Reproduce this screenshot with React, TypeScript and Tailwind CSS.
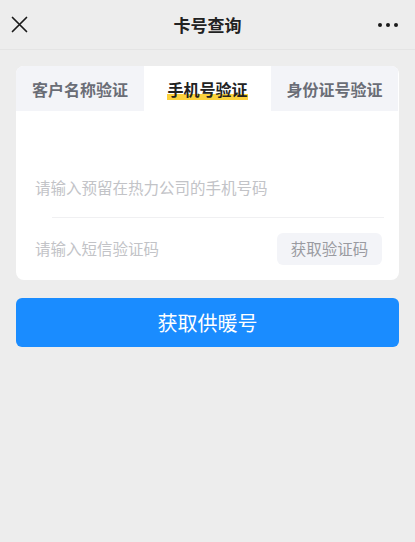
import { useState } from "react";

const tabs = ["客户名称验证", "手机号验证", "身份证号验证"];

export default function App() {
  const [active, setActive] = useState(1);

  return (
    <div
      className="min-h-[542px] bg-[#ededed] text-[#222]"
      style={{ fontFamily: '"Noto Sans CJK SC", "Noto Sans", sans-serif' }}
    >
      {/* Top bar */}
      <header className="relative flex h-[50px] items-center justify-between border-b border-[#e4e4e4] px-[11px]">
        <svg width="17" height="17" viewBox="0 0 17 17" fill="none" stroke="#1a1a1a" strokeWidth="1.7" strokeLinecap="round">
          <path d="M1.5 1.5 L15.5 15.5 M15.5 1.5 L1.5 15.5" />
        </svg>
        <h1 className="absolute left-1/2 -translate-x-1/2 text-[17px] font-bold">卡号查询</h1>
        <div className="mr-[6px] flex items-center gap-[4px]">
          <span className="h-[4px] w-[4px] rounded-full bg-[#1a1a1a]" />
          <span className="h-[4px] w-[4px] rounded-full bg-[#1a1a1a]" />
          <span className="h-[4px] w-[4px] rounded-full bg-[#1a1a1a]" />
        </div>
      </header>

      <main className="px-4 pt-[16px]">
        <div className="overflow-hidden rounded-lg bg-white">
          <div className="grid h-[45px] grid-cols-[128px_127px_127px]">
            {tabs.map((t, i) => (
              <button
                key={t}
                onClick={() => setActive(i)}
                className={
                  i === active
                    ? "flex items-center justify-center bg-white text-[16px] font-bold text-[#222]"
                    : "flex items-center justify-center bg-[#f3f4f8] text-[16px] font-bold text-[#6a6d76]"
                }
              >
                {i === active ? (
                  <span className="bg-[linear-gradient(to_bottom,transparent_72%,#fcd23c_72%,#fcd23c_100%)] leading-[22px]">
                    {t}
                  </span>
                ) : (
                  t
                )}
              </button>
            ))}
          </div>

          <div className="pt-[48px]">
            <div className="flex h-[58px] items-center pl-[19px] text-[15.5px] text-[#c2c3c7]">
              请输入预留在热力公司的手机号码
            </div>
            <div className="ml-[36px] mr-[15px] border-t border-[#f0f0f2]" />
            <div className="flex items-center justify-between py-[15px] pl-[19px] pr-[17px]">
              <span className="text-[15.5px] text-[#c2c3c7]">请输入短信验证码</span>
              <button className="flex h-[32px] w-[105px] items-center justify-center rounded-md bg-[#f3f4f8] text-[15.5px] text-[#9a9ba1]">
                获取验证码
              </button>
            </div>
          </div>
        </div>

        <button className="mt-[18px] flex h-[49px] w-full items-center justify-center rounded-md bg-[#1a8cff] text-[20px] text-white">
          获取供暖号
        </button>
      </main>
    </div>
  );
}
